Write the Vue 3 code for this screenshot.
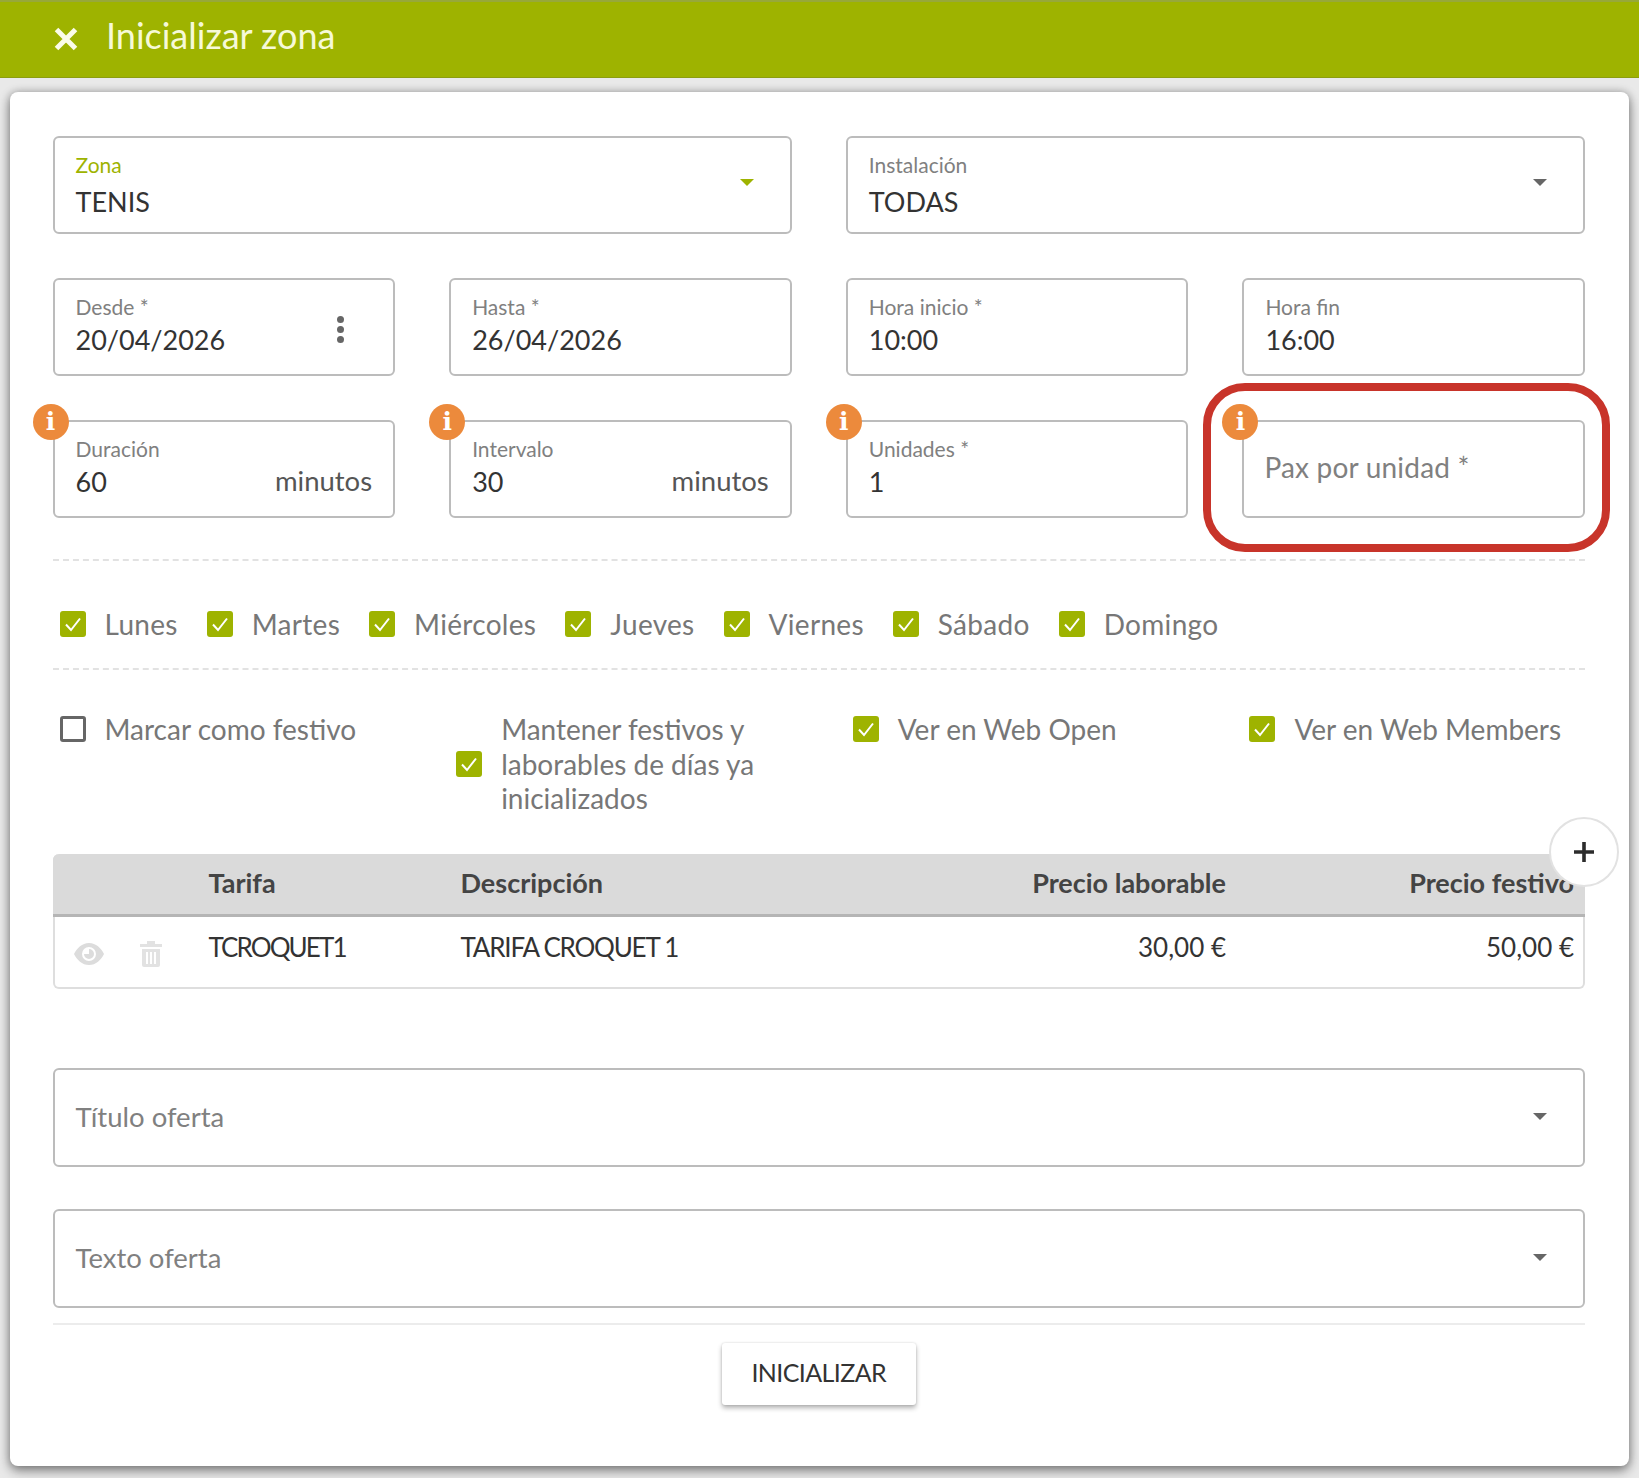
<script setup>
const dateFields = [
  { label: 'Desde *', value: '20/04/2026', menu: true },
  { label: 'Hasta *', value: '26/04/2026' },
  { label: 'Hora inicio *', value: '10:00' },
  { label: 'Hora fin', value: '16:00' }
]

const capacityFields = [
  { label: 'Duración', value: '60', unit: 'minutos' },
  { label: 'Intervalo', value: '30', unit: 'minutos' },
  { label: 'Unidades *', value: '1' }
]

const days = ['Lunes', 'Martes', 'Miércoles', 'Jueves', 'Viernes', 'Sábado', 'Domingo']
</script>

<template>
  <div class="page">
    <header class="topbar">
      <svg class="close" viewBox="0 0 24 24" width="24" height="24">
        <path d="M2.5 2.5 L21.5 21.5 M21.5 2.5 L2.5 21.5" stroke="#fbfce8" stroke-width="5" fill="none" />
      </svg>
      <h1 class="title">Inicializar zona</h1>
    </header>

    <main class="card">
      <div class="fields">
        <div class="field wide">
          <span class="label active">Zona</span>
          <span class="value">TENIS</span>
          <i class="arrow green"></i>
        </div>
        <div class="field wide">
          <span class="label">Instalación</span>
          <span class="value">TODAS</span>
          <i class="arrow"></i>
        </div>

        <div class="field" v-for="f in dateFields" :key="f.label">
          <span class="label">{{ f.label }}</span>
          <span class="value">{{ f.value }}</span>
          <span class="dots" v-if="f.menu"><b></b><b></b><b></b></span>
        </div>

        <div class="field" v-for="f in capacityFields" :key="f.label">
          <span class="info">i</span>
          <span class="label">{{ f.label }}</span>
          <span class="value">{{ f.value }}</span>
          <span class="unit" v-if="f.unit">{{ f.unit }}</span>
        </div>
        <div class="field empty">
          <span class="info">i</span>
          <span class="placeholder">Pax por unidad *</span>
          <div class="highlight"></div>
        </div>
      </div>

      <div class="days">
        <label class="check" v-for="d in days" :key="d">
          <span class="box on">
            <svg viewBox="0 0 26 26" width="26" height="26"><path d="M6 13.5 L11 19 L20 7.5" stroke="#fff" stroke-width="2" fill="none" /></svg>
          </span>
          <span>{{ d }}</span>
        </label>
      </div>

      <div class="options">
        <label class="check">
          <span class="box"></span>
          <span>Marcar como festivo</span>
        </label>
        <label class="check multi">
          <span class="box on">
            <svg viewBox="0 0 26 26" width="26" height="26"><path d="M6 13.5 L11 19 L20 7.5" stroke="#fff" stroke-width="2" fill="none" /></svg>
          </span>
          <span>Mantener festivos y laborables de días ya inicializados</span>
        </label>
        <label class="check">
          <span class="box on">
            <svg viewBox="0 0 26 26" width="26" height="26"><path d="M6 13.5 L11 19 L20 7.5" stroke="#fff" stroke-width="2" fill="none" /></svg>
          </span>
          <span>Ver en Web Open</span>
        </label>
        <label class="check">
          <span class="box on">
            <svg viewBox="0 0 26 26" width="26" height="26"><path d="M6 13.5 L11 19 L20 7.5" stroke="#fff" stroke-width="2" fill="none" /></svg>
          </span>
          <span>Ver en Web Members</span>
        </label>
      </div>

      <div class="tarifas">
        <div class="row head">
          <span></span>
          <span>Tarifa</span>
          <span>Descripción</span>
          <span class="num">Precio laborable</span>
          <span class="num">Precio festivo</span>
        </div>
        <div class="row body">
          <span class="actions">
            <svg viewBox="0 0 30 24" width="30" height="24">
              <path fill-rule="evenodd" fill="#dcdcdc" d="M15 1 C8 1 3 6 0 12 C3 18 8 23 15 23 C22 23 27 18 30 12 C27 6 22 1 15 1 Z M15 5 A7 7 0 1 1 15 19 A7 7 0 1 1 15 5 Z" />
              <path fill="#dcdcdc" d="M15 7 A5 5 0 1 1 10 12 L15 12 Z" />
            </svg>
            <svg viewBox="0 0 22 26" width="22" height="26">
              <path fill="#e2e2e2" d="M0 3 H7 V0 H15 V3 H22 V6 H0 Z" />
              <path fill="#e2e2e2" fill-rule="evenodd" d="M2 8 H20 V24 Q20 26 18 26 H4 Q2 26 2 24 Z M6 11 V23 H8 V11 Z M10 11 V23 H12 V11 Z M14 11 V23 H16 V11 Z" />
            </svg>
          </span>
          <span class="code">TCROQUET1</span>
          <span class="caps">TARIFA CROQUET 1</span>
          <span class="num">30,00 €</span>
          <span class="num">50,00 €</span>
        </div>
        <button class="add" type="button">
          <svg viewBox="0 0 24 24" width="24" height="24"><path d="M12 2 V22 M2 12 H22" stroke="#2c2c2c" stroke-width="3.6" fill="none" /></svg>
        </button>
      </div>

      <div class="field select first">
        <span class="placeholder">Título oferta</span>
        <i class="arrow"></i>
      </div>
      <div class="field select">
        <span class="placeholder">Texto oferta</span>
        <i class="arrow"></i>
      </div>

      <footer class="foot">
        <button class="submit" type="button">INICIALIZAR</button>
      </footer>
    </main>
  </div>
</template>

<style scoped>
.page {
  width: 1639px;
  height: 1478px;
  overflow: hidden;
  background: #e9e9e9;
  font-family: Lato, "Liberation Sans", sans-serif;
  color: #333;
}

.topbar {
  display: flex;
  align-items: center;
  height: 78px;
  box-sizing: border-box;
  padding: 0 0 6px 54px;
  gap: 28px;
  background: #9eb300;
  border-top: 2px solid #97a83a;
  border-bottom: 1px solid #8c9d10;
}

.close {
  position: relative;
  top: 2px;
}

.title {
  margin: 0 0 3px;
  font-size: 36px;
  font-weight: 400;
  color: #f6f9d8;
}

.card {
  margin: 14px 10px 0;
  height: 1374px;
  box-sizing: border-box;
  padding: 44px 44px 0 42.5px;
  background: #fff;
  border-radius: 8px;
  box-shadow: 0 5px 12px rgba(0, 0, 0, 0.4), 0 0 8px rgba(0, 0, 0, 0.25);
}

.fields {
  display: grid;
  grid-template-columns: repeat(4, 1fr);
  gap: 44px 54px;
  padding-bottom: 41px;
  border-bottom: 2px dashed #e2e2e2;
}

.field {
  position: relative;
  display: flex;
  flex-direction: column;
  justify-content: center;
  height: 98px;
  box-sizing: border-box;
  padding: 0 21px;
  border: 2px solid #bcbcbc;
  border-radius: 6px;
}

.wide {
  grid-column: span 2;
}

.label {
  font-size: 21px;
  line-height: 26px;
  color: #808080;
  margin-top: -3px;
  margin-bottom: 3px;
}

.wide .label {
  margin-top: 1px;
}

.label.active {
  color: #9eb300;
}

.value {
  font-size: 27px;
  line-height: 34px;
  color: #333;
}

.wide .value {
  margin-top: 4px;
}

.unit {
  position: absolute;
  right: 21px;
  bottom: 18px;
  font-size: 27.5px;
  line-height: 34px;
  color: #555;
}

.placeholder {
  font-size: 28px;
  letter-spacing: 0.2px;
  margin: -4px 0 0 -1px;
  color: #808080;
}

.arrow {
  position: absolute;
  right: 36px;
  top: 41px;
  width: 0;
  height: 0;
  border-left: 7px solid transparent;
  border-right: 7px solid transparent;
  border-top: 7px solid #666;
}

.arrow.green {
  border-top-color: #9eb300;
}

.dots {
  position: absolute;
  right: 49px;
  top: 36px;
  display: flex;
  flex-direction: column;
  gap: 3px;
}

.dots b {
  width: 7px;
  height: 7px;
  border-radius: 50%;
  background: #666;
}

.info {
  position: absolute;
  left: -22px;
  top: -18px;
  z-index: 2;
  width: 36px;
  height: 36px;
  border-radius: 50%;
  background: #ec8a3c;
  color: #fff;
  font-family: "DejaVu Serif", serif;
  font-weight: 700;
  font-size: 25px;
  line-height: 36px;
  text-align: center;
}

.highlight {
  position: absolute;
  left: -41px;
  right: -27px;
  top: -39px;
  bottom: -36px;
  border: 8px solid #c8342a;
  border-radius: 42px;
  pointer-events: none;
}

.days {
  display: flex;
  align-items: center;
  gap: 29px;
  height: 107px;
  padding-left: 7px;
  border-bottom: 2px dashed #e2e2e2;
}

.days .check {
  position: relative;
  top: 9px;
  letter-spacing: 0.3px;
}

.check {
  display: flex;
  align-items: center;
  gap: 19px;
  font-size: 28px;
  color: #777;
}

.box {
  flex: none;
  width: 26px;
  height: 26px;
  box-sizing: border-box;
  border: 3px solid #666;
  border-radius: 3px;
}

.box.on {
  border: 0;
  background: #9eb300;
}

.box svg {
  display: block;
}

.options {
  display: grid;
  grid-template-columns: repeat(4, 1fr);
  column-gap: 54px;
  align-items: start;
  height: 184px;
  padding-top: 42px;
  box-sizing: border-box;
}

.options .check {
  padding-left: 7px;
  line-height: 34.5px;
}

.tarifas {
  position: relative;
  border: 2px solid #dedede;
  border-top: 0;
  border-radius: 6px;
}

.row {
  display: grid;
  grid-template-columns: 154px 252px 1fr 300px 348px;
  padding-right: 9px;
  font-size: 26px;
}

.row .num {
  text-align: right;
}

.head {
  height: 60px;
  align-items: center;
  margin: 0 -2px;
  padding: 0 11px 0 2px;
  background: #dadada;
  border-radius: 6px 6px 0 0;
  border-bottom: 3px solid #b5b5b5;
  font-size: 27px;
  font-weight: 700;
  color: #444;
}

.head span {
  position: relative;
  top: -2px;
}

.body {
  height: 70px;
  padding-top: 14px;
  box-sizing: border-box;
  color: #333;
}

.caps {
  letter-spacing: -1.2px;
}

.code {
  letter-spacing: -1.9px;
}

.actions {
  display: flex;
  align-items: center;
  gap: 36px;
  height: 50px;
  padding-left: 19px;
  margin-top: -2px;
}

.add {
  position: absolute;
  right: -36px;
  top: -37px;
  width: 70px;
  height: 70px;
  padding: 0;
  display: flex;
  align-items: center;
  justify-content: center;
  background: #fff;
  border: 2px solid #e2e2e2;
  border-radius: 50%;
}

.select {
  height: 99px;
  margin-top: 42px;
  padding-bottom: 2px;
}

.select.first {
  margin-top: 79px;
}

.select .placeholder {
  font-size: 27.5px;
  letter-spacing: 0;
  margin: -1px 0 0;
}

.select .arrow {
  top: 43px;
}

.foot {
  display: flex;
  justify-content: center;
  margin-top: 15px;
  padding-top: 18px;
  border-top: 2px solid #ececec;
}

.submit {
  width: 194px;
  height: 62px;
  padding: 0 0 4px;
  background: #fff;
  border: 0;
  border-radius: 3px;
  box-shadow: 0 3px 5px rgba(0, 0, 0, 0.3), 0 0 2px rgba(0, 0, 0, 0.15);
  font-family: inherit;
  font-size: 25px;
  letter-spacing: -0.6px;
  color: #333;
}
</style>
